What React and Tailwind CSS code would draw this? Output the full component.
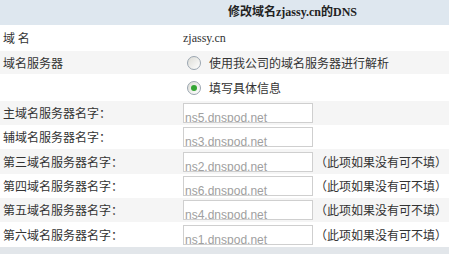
/**
 * DnsEditForm - 修改域名 DNS 表单
 */
const cn = '"Noto Sans CJK SC", "Liberation Sans", sans-serif'

const servers = [
  { label: '主域名服务器名字：', value: 'ns5.dnspod.net', optional: false, h: 'h-[24px]', gray: true },
  { label: '辅域名服务器名字：', value: 'ns3.dnspod.net', optional: false, h: 'h-[24px]', gray: false },
  { label: '第三域名服务器名字：', value: 'ns2.dnspod.net', optional: true, h: 'h-[25px]', gray: true },
  { label: '第四域名服务器名字：', value: 'ns6.dnspod.net', optional: true, h: 'h-[24px]', gray: false },
  { label: '第五域名服务器名字：', value: 'ns4.dnspod.net', optional: true, h: 'h-[24px]', gray: true },
  { label: '第六域名服务器名字：', value: 'ns1.dnspod.net', optional: true, h: 'h-[25px]', gray: false },
]

function Radio({ checked }) {
  return (
    <span className="w-[14px] h-[14px] rounded-full border border-[#9aa5b0] bg-gradient-to-br from-[#dcdcd6] to-white flex items-center justify-center shrink-0">
      {checked && <span className="w-[6px] h-[6px] rounded-full bg-[#33a533]" />}
    </span>
  )
}

function Row({ label, gray, h, children }) {
  return (
    <div className={`flex items-center ${h} ${gray ? 'bg-[#f5f5f5]' : 'bg-white'}`}>
      <div className="w-[180px] pl-[3px] text-[12px] text-[#333]" style={{ fontFamily: cn }}>
        {label}
      </div>
      <div className="flex-1 flex items-center pl-[3px]">{children}</div>
    </div>
  )
}

export default function App() {
  return (
    <div className="w-[449px] h-[254px] bg-white overflow-hidden">
      {/* Header */}
      <div className="h-[25px] bg-[#dee7ef] flex items-center pl-[228px] pb-[2px]">
        <span
          className="text-[12px] font-bold text-[#222]"
          style={{ fontFamily: '"Liberation Serif", "Noto Sans CJK SC", serif' }}
        >
          修改域名zjassy.cn的DNS
        </span>
      </div>

      <Row label="域 名" h="h-[26px]">
        <span className="text-[12px] text-[#333]" style={{ fontFamily: '"Liberation Serif", serif' }}>
          zjassy.cn
        </span>
      </Row>

      <Row label="域名服务器" gray h="h-[23px]">
        <div className="flex items-center pl-[4px] gap-[8px]">
          <Radio />
          <span className="text-[12px] text-[#333]" style={{ fontFamily: cn }}>使用我公司的域名服务器进行解析</span>
        </div>
      </Row>

      <Row label="" h="h-[27px]">
        <div className="flex items-center pl-[4px] gap-[8px]">
          <Radio checked />
          <span className="text-[12px] text-[#333]" style={{ fontFamily: cn }}>填写具体信息</span>
        </div>
      </Row>

      {servers.map((s) => (
        <Row key={s.label} label={s.label} gray={s.gray} h={s.h}>
          <div className="w-[130px] h-[20px] border border-[#cfcfcf] bg-white overflow-hidden pl-[1px] pt-[7px]">
            <div
              className="text-[12px] leading-[14px] text-[#a0a0a0] whitespace-nowrap"
              style={{ fontFamily: '"Liberation Sans", sans-serif' }}
            >
              {s.value}
            </div>
          </div>
          {s.optional && (
            <span className="ml-[2px] text-[12px] text-[#333]" style={{ fontFamily: cn }}>
              （此项如果没有可不填）
            </span>
          )}
        </Row>
      ))}

      <div className="h-[7px] bg-[#e2e6ea]" />
    </div>
  )
}
